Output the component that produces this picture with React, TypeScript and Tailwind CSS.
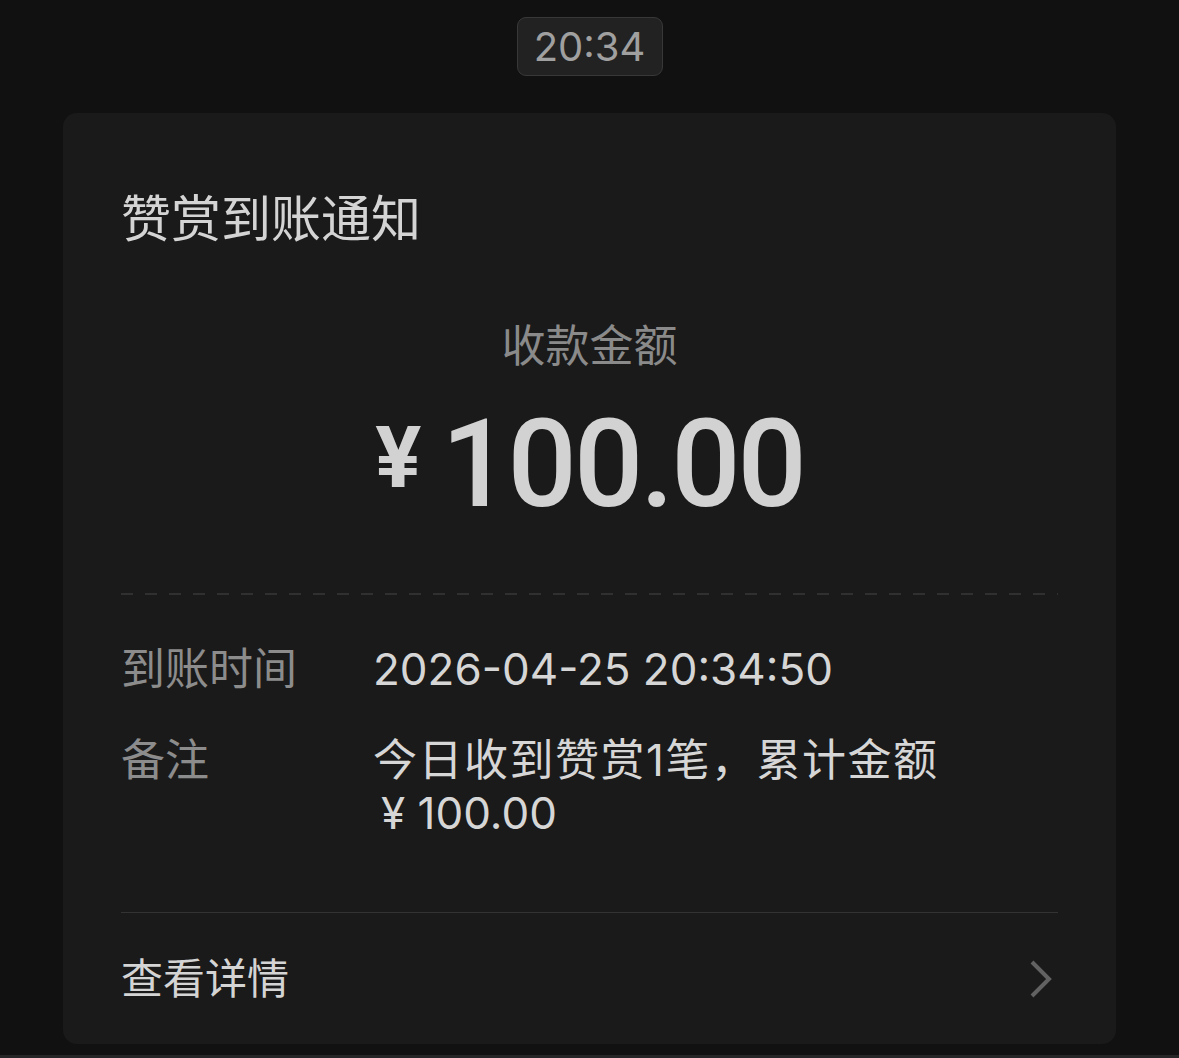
import React from 'react';

const font = { fontFamily: 'Inter, "Noto Sans CJK SC", sans-serif' };

function Row({ label, children }: { label: string; children: React.ReactNode }) {
  return (
    <div className="flex">
      <div className="w-[252px] shrink-0 text-[#8c8c8c]">{label}</div>
      <div className="text-[#d6d6d6]">{children}</div>
    </div>
  );
}

export default function App() {
  return (
    <div className="min-h-[1058px] w-full bg-[#111111] flex flex-col items-center" style={font}>
      <div className="mt-[17px] h-[59px] w-[146px] flex items-center justify-center rounded-[9px] border border-[#383838] bg-[#222222] text-[40px] text-[#a0a0a0]">
        20:34
      </div>

      <div className="mt-[37px] w-[1053px] rounded-[14px] bg-[#1a1a1a] px-[58px] pt-[76px]">
        <div className="text-[50px] leading-[60px] text-[#d4d4d4]">赞赏到账通知</div>

        <div className="mt-[70px] flex flex-col items-center">
          <div className="text-[44px] leading-[54px] text-[#8a8a8a]">收款金额</div>
          <div className="mt-[32px] flex items-start text-[#d2d2d2]" style={{ fontFamily: 'Roboto, sans-serif' }}>
            <span className="mt-[10px] mr-[20px] text-[86px] font-bold leading-none">¥</span>
            <span className="text-[122px] font-medium leading-[120px] tracking-[-3px]">100.00</span>
          </div>
        </div>

        <div className="mt-[68px] h-[2px] bg-[repeating-linear-gradient(to_right,#303030_0_12px,transparent_12px_24px)]" />

        <div className="mt-[48px] flex flex-col gap-[38px] text-[44px] leading-[53px]">
          <Row label="到账时间">2026-04-25 20:34:50</Row>
          <Row label="备注">
            <div className="tracking-[1.5px]">今日收到赞赏1笔，累计金额</div>
            <div className="pl-[8px]">¥ 100.00</div>
          </Row>
        </div>

        <div className="mt-[72px] border-t border-[#333333]" />

        <div className="flex h-[131px] items-center justify-between">
          <span className="text-[42px] text-[#d4d4d4]">查看详情</span>
          <svg width="26" height="40" viewBox="0 0 26 40" className="mr-[4px]">
            <path d="M4 3 L21 20 L4 37" fill="none" stroke="#626262" strokeWidth="4" />
          </svg>
        </div>
      </div>
      <div className="mt-auto h-[3px] w-full bg-[#262626]" />
    </div>
  );
}
